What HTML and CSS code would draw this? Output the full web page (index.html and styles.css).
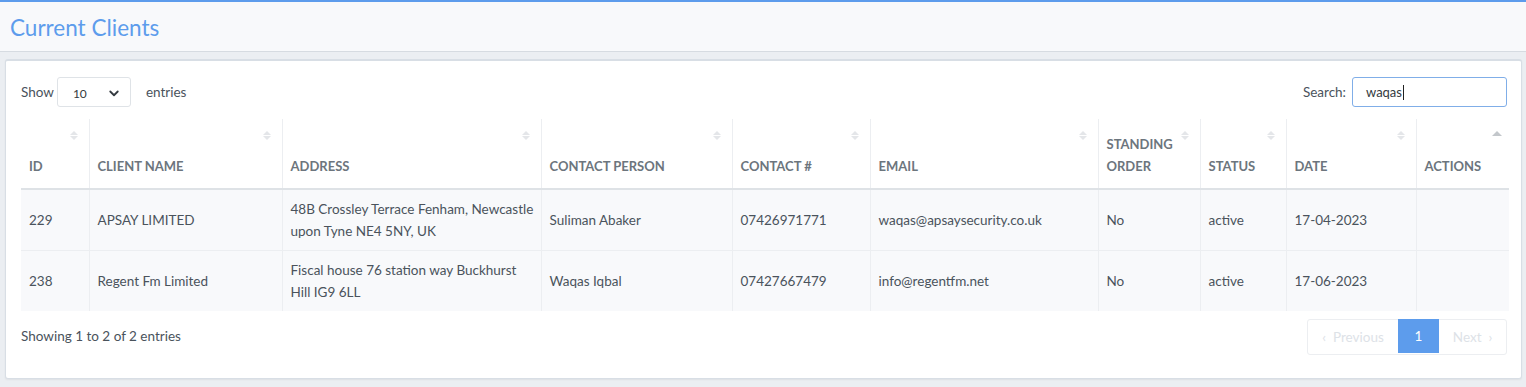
FILE: index.html
```html
<!DOCTYPE html>
<html lang="en">

<head>
    <meta charset="UTF-8">
    <meta name="viewport" content="width=device-width, initial-scale=1.0">
    <title>Current Clients</title>
    <link rel="stylesheet" href="styles.css">
</head>

<body>
    <div class="page-header">
        <h1>Current Clients</h1>
    </div>
    <div class="content">
        <div class="card">
            <div class="table-controls">
                <label class="length">
                    Show
                    <span class="select">10
                        <svg viewBox="0 0 16 16" width="12" height="12">
                            <path d="M3 6l5 5 5-5" fill="none" stroke="#343a40" stroke-width="2.4" stroke-linecap="round" stroke-linejoin="round" />
                        </svg>
                    </span>
                    entries
                </label>
                <label class="search">
                    Search:
                    <span class="search__input">waqas<span class="caret"></span></span>
                </label>
            </div>

            <table class="clients-table">
                <colgroup>
                    <col style="width: 68px">
                    <col style="width: 193px">
                    <col style="width: 259px">
                    <col style="width: 191px">
                    <col style="width: 138px">
                    <col style="width: 228px">
                    <col style="width: 102px">
                    <col style="width: 86px">
                    <col style="width: 130px">
                    <col style="width: 93px">
                </colgroup>
                <thead>
                    <tr>
                        <th class="sortable">ID</th>
                        <th class="sortable">Client Name</th>
                        <th class="sortable">Address</th>
                        <th class="sortable">Contact Person</th>
                        <th class="sortable">Contact #</th>
                        <th class="sortable">Email</th>
                        <th class="sortable">Standing<br>Order</th>
                        <th class="sortable">Status</th>
                        <th class="sortable">Date</th>
                        <th class="sorted-asc">Actions</th>
                    </tr>
                </thead>
                <tbody>
                    <tr>
                        <td>229</td>
                        <td>APSAY LIMITED</td>
                        <td class="address">48B Crossley Terrace Fenham, Newcastle<br>upon Tyne NE4 5NY, UK</td>
                        <td>Suliman Abaker</td>
                        <td>07426971771</td>
                        <td>waqas@apsaysecurity.co.uk</td>
                        <td>No</td>
                        <td>active</td>
                        <td>17-04-2023</td>
                        <td></td>
                    </tr>
                    <tr>
                        <td>238</td>
                        <td>Regent Fm Limited</td>
                        <td class="address">Fiscal house 76 station way Buckhurst<br>Hill IG9 6LL</td>
                        <td>Waqas Iqbal</td>
                        <td>07427667479</td>
                        <td>info@regentfm.net</td>
                        <td>No</td>
                        <td>active</td>
                        <td>17-06-2023</td>
                        <td></td>
                    </tr>
                </tbody>
            </table>

            <div class="table-footer">
                <div class="table-info">Showing 1 to 2 of 2 entries</div>
                <ul class="pagination">
                    <li class="pagination__item disabled">&lsaquo;&nbsp; Previous</li>
                    <li class="pagination__item active">1</li>
                    <li class="pagination__item disabled">Next &nbsp;&rsaquo;</li>
                </ul>
            </div>
        </div>
    </div>
</body>

</html>
```

FILE: styles.css
```css
:root {
    --primary-color: #5d9cec;
    --page-bg: #ebeef2;
    --header-bg: #f8f9fb;
    --border-color: #dee2e6;
    --cell-border: #eceef1;
    --text-color: #4a535c;
    --heading-color: #6c757d;
    --muted-color: #dde2e7;
    --sort-color: #e4e6e9;
}

* {
    box-sizing: border-box;
}

body {
    margin: 0;
    font-family: 'Source Sans Pro', 'Lato', sans-serif;
    font-size: 13.5px;
    color: var(--text-color);
    background-color: var(--page-bg);
    min-height: 387px;
}

.page-header {
    background-color: var(--header-bg);
    border-top: 2px solid var(--primary-color);
    border-bottom: 1px solid #d6dbe1;
    height: 52px;
    padding: 1px 10px 0;
    display: flex;
    align-items: center;
}

h1 {
    margin: 0;
    font-size: 22.5px;
    font-weight: 400;
    color: var(--primary-color);
}

.content {
    padding: 7px 4px 8px 5px;
}

.card {
    background-color: #fff;
    border: 1px solid #d8dee5;
    border-top-width: 2px;
    border-radius: 3px;
    padding: 16px 14px 23px 15px;
    box-shadow: 0 1px 2px rgba(0, 0, 0, 0.06);
}

.table-controls {
    display: flex;
    justify-content: space-between;
    align-items: center;
    height: 30px;
    margin-bottom: 12px;
}

.length,
.search {
    display: flex;
    align-items: center;
    gap: 3px;
}

.select {
    width: 74px;
    height: 30px;
    margin: 0 12px 0 0;
    padding: 2px 10px 0 15px;
    border: 1px solid #dfe3e7;
    border-radius: 3px;
    display: flex;
    align-items: center;
    justify-content: space-between;
    font-size: 12px;
    color: #343a40;
}

.search {
    gap: 6px;
}

.search__input {
    width: 155px;
    height: 30px;
    border: 1px solid #80aee8;
    border-radius: 3px;
    padding: 0 13px;
    display: flex;
    align-items: center;
    font-size: 13px;
    color: #343a40;
}

.caret {
    width: 1px;
    height: 15px;
    background-color: #222;
    margin-left: 1px;
}

.clients-table {
    width: 1488px;
    border-collapse: collapse;
    table-layout: fixed;
}

.clients-table th {
    position: relative;
    text-align: left;
    vertical-align: bottom;
    text-transform: uppercase;
    font-weight: 700;
    font-size: 13px;
    color: var(--heading-color);
    line-height: 22px;
    padding: 14px 8px 11px;
    border-left: 1px solid var(--cell-border);
    border-bottom: 2px solid var(--border-color);
}

.clients-table th:first-child,
.clients-table td:first-child {
    border-left: none;
}

/* sort arrows: up triangle + down triangle */
.clients-table th.sortable::before,
.clients-table th.sortable::after {
    content: '';
    position: absolute;
    right: 11px;
    border-left: 4px solid transparent;
    border-right: 4px solid transparent;
}

.clients-table th.sortable::before {
    top: 12px;
    border-bottom: 4px solid var(--sort-color);
}

.clients-table th.sortable::after {
    top: 17px;
    border-top: 4px solid var(--sort-color);
}

.clients-table th.sorted-asc::after {
    content: '';
    position: absolute;
    top: 12px;
    right: 7px;
    border-left: 5px solid transparent;
    border-right: 5px solid transparent;
    border-bottom: 5px solid #c3c7cb;
}

.clients-table td {
    background-color: var(--header-bg);
    line-height: 22px;
    padding: 8px 8px;
    height: 60px;
    vertical-align: middle;
    border-top: 1px solid var(--cell-border);
    border-left: 1px solid var(--cell-border);
}

.clients-table td.address {
    white-space: nowrap;
    padding-right: 4px;
}

.clients-table tbody tr:first-child td {
    border-top: none;
}

.table-footer {
    display: flex;
    justify-content: space-between;
    align-items: center;
    margin-top: 8px;
}

.table-info {
    margin-top: -3px;
}

.pagination {
    list-style: none;
    margin: 0;
    padding: 0;
    display: flex;
    border: 1px solid #eceef1;
    border-radius: 3px;
}

.pagination__item {
    height: 34px;
    display: flex;
    align-items: center;
    padding: 0 11px;
    color: var(--muted-color);
}

.pagination__item:first-child {
    width: 90px;
    justify-content: center;
}

.pagination__item:last-child {
    width: 67px;
    justify-content: center;
}

.pagination__item.active {
    width: 41px;
    justify-content: center;
    background-color: var(--primary-color);
    color: #fff;
    margin: -1px 0;
    height: 34px;
}
```
